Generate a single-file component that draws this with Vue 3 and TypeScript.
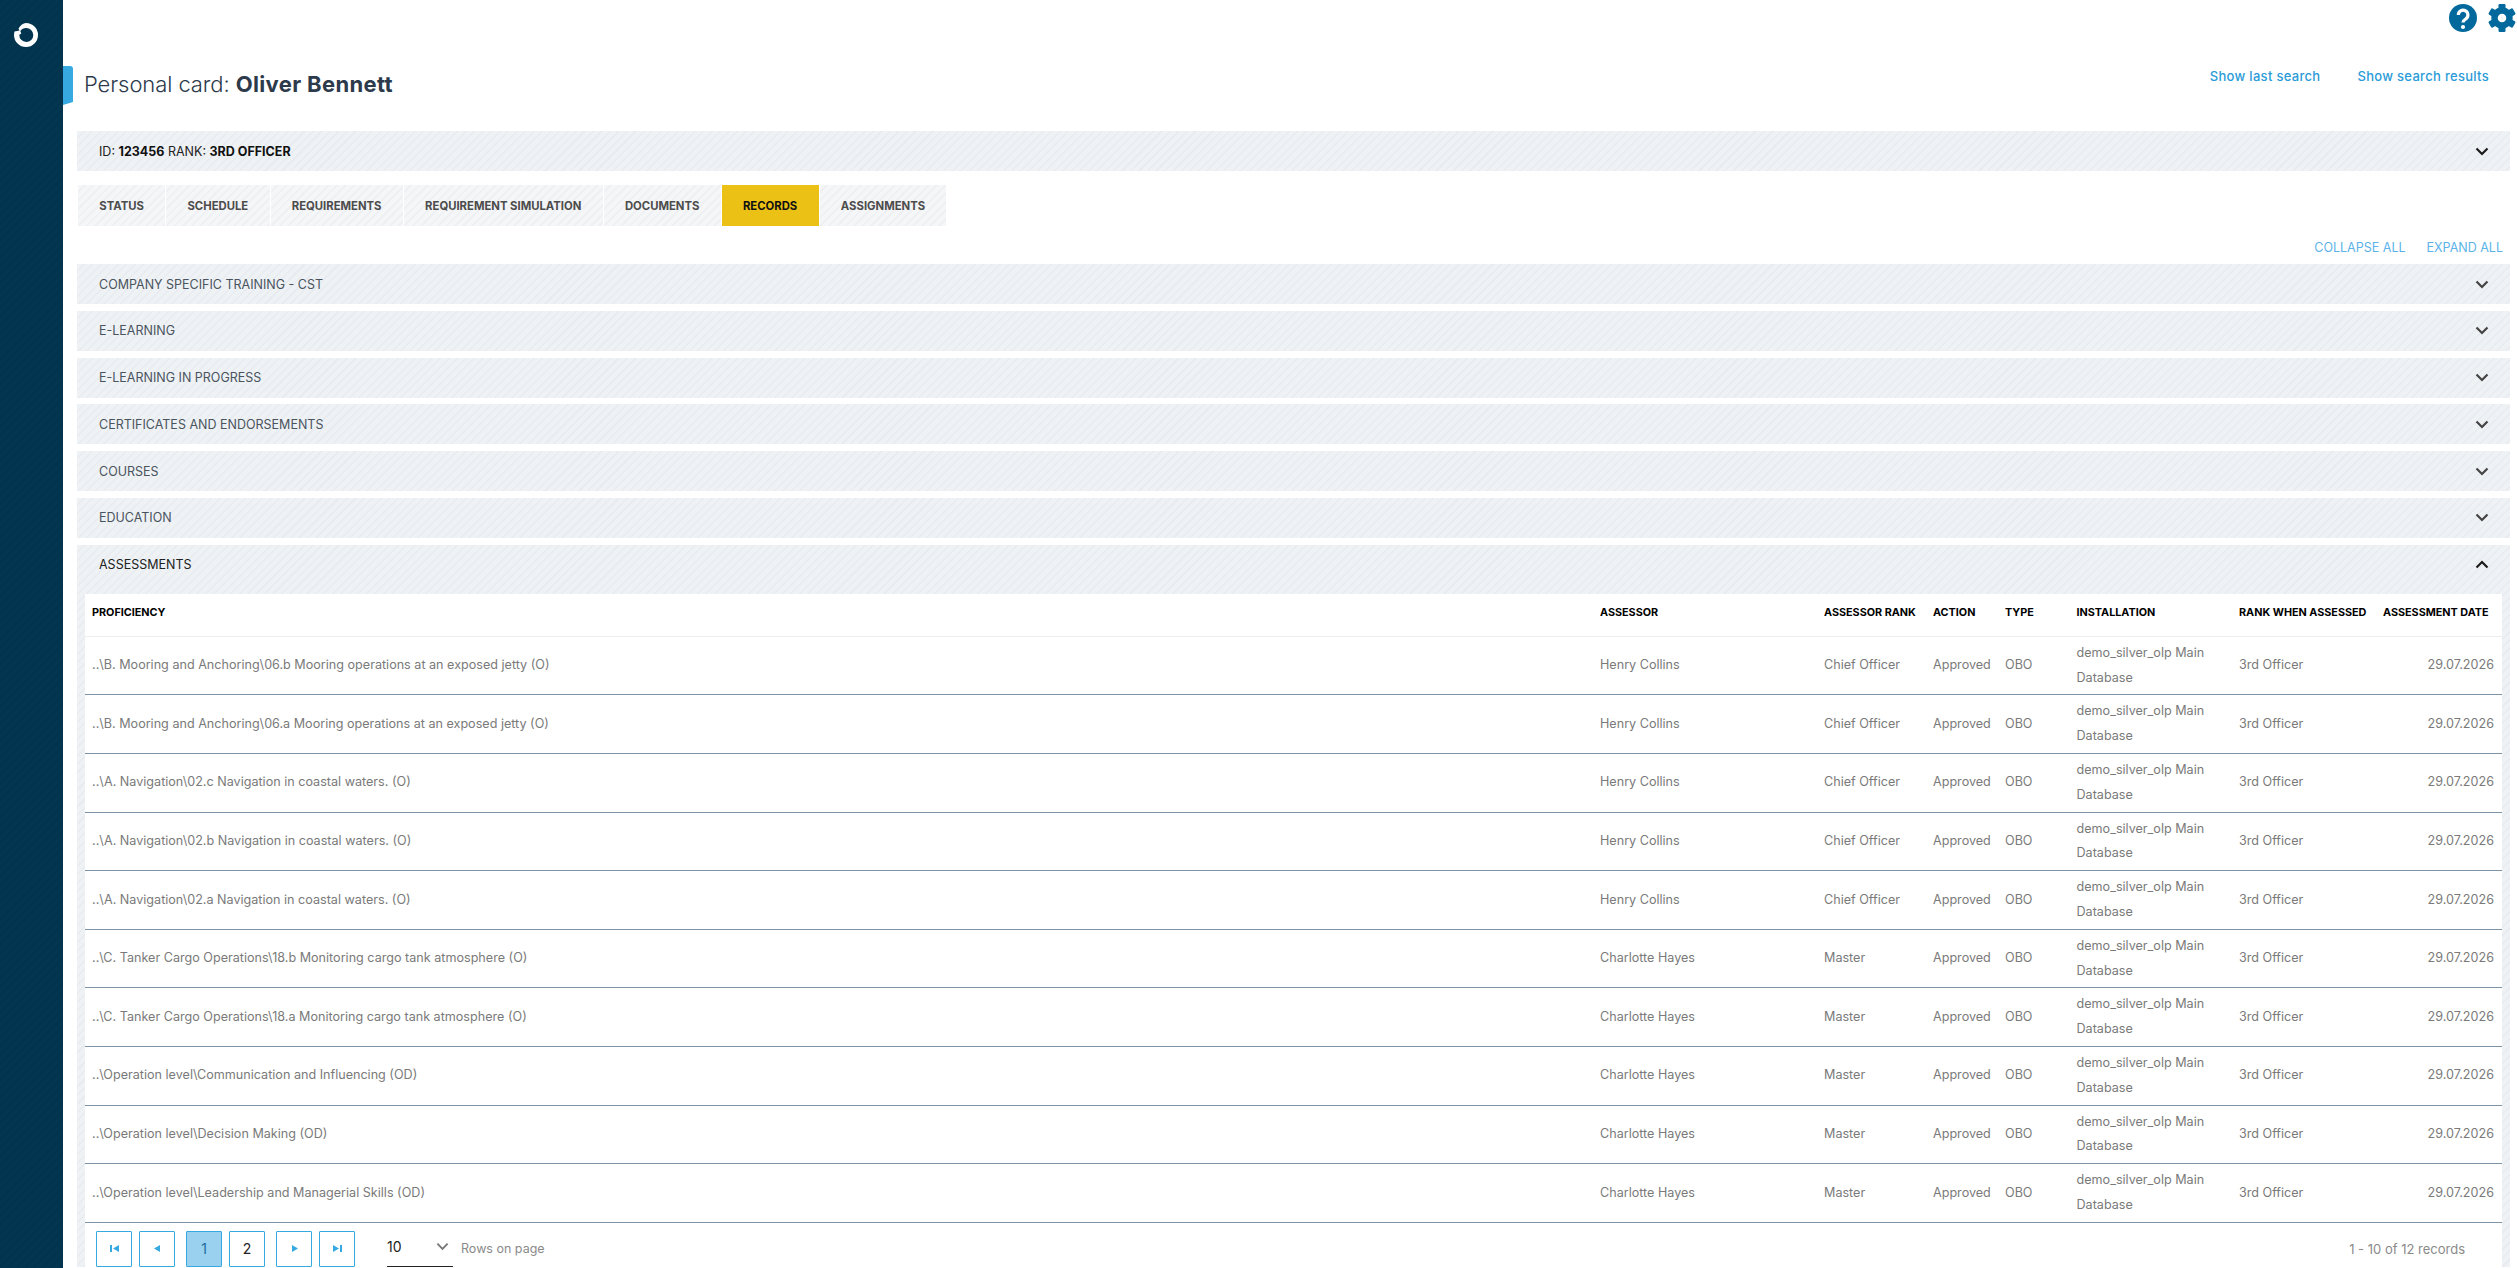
<script setup lang="ts">
interface Row { p: string; a: string; r: string }
const tabs = ['Status', 'Schedule', 'Requirements', 'Requirement simulation', 'Documents', 'Records', 'Assignments']
const sections = ['Company specific training - CST', 'E-learning', 'E-learning in progress', 'Certificates and endorsements', 'Courses', 'Education']
const cols = ['Proficiency', 'Assessor', 'Assessor rank', 'Action', 'Type', 'Installation', 'Rank when assessed', 'Assessment date']
const rows: Row[] = [
  { p: '..\\B. Mooring and Anchoring\\06.b Mooring operations at an exposed jetty (O)', a: 'Henry Collins', r: 'Chief Officer' },
  { p: '..\\B. Mooring and Anchoring\\06.a Mooring operations at an exposed jetty (O)', a: 'Henry Collins', r: 'Chief Officer' },
  { p: '..\\A. Navigation\\02.c Navigation in coastal waters. (O)', a: 'Henry Collins', r: 'Chief Officer' },
  { p: '..\\A. Navigation\\02.b Navigation in coastal waters. (O)', a: 'Henry Collins', r: 'Chief Officer' },
  { p: '..\\A. Navigation\\02.a Navigation in coastal waters. (O)', a: 'Henry Collins', r: 'Chief Officer' },
  { p: '..\\C. Tanker Cargo Operations\\18.b Monitoring cargo tank atmosphere (O)', a: 'Charlotte Hayes', r: 'Master' },
  { p: '..\\C. Tanker Cargo Operations\\18.a Monitoring cargo tank atmosphere (O)', a: 'Charlotte Hayes', r: 'Master' },
  { p: '..\\Operation level\\Communication and Influencing (OD)', a: 'Charlotte Hayes', r: 'Master' },
  { p: '..\\Operation level\\Decision Making (OD)', a: 'Charlotte Hayes', r: 'Master' },
  { p: '..\\Operation level\\Leadership and Managerial Skills (OD)', a: 'Charlotte Hayes', r: 'Master' },
]
const teeth = [0, 60, 120, 180, 240, 300]
</script>

<template>
  <div class="shell">
    <aside class="side">
      <svg class="logo" viewBox="0 0 24 24" aria-label="logo">
        <path d="M12 0a12 12 0 1 1-12 12c0-1.200.2-2.400.5-3.500L5.500 7.500 4.500 5.500C6.600 2.200 9.100 0 12 0zm0 5a7 7 0 0 0-5.700 3l1 2.500-2 1.200A7 7 0 1 0 12 5z" fill="#fff" fill-rule="evenodd" />
      </svg>
    </aside>
    <main class="main">
      <div class="top">
        <svg class="ico" viewBox="0 0 28 28">
          <circle cx="14" cy="14" r="14" fill="#03699c" />
          <path d="M9.300 11a4.800 4.800 0 1 1 7.400 4c-1.700 1.100-2.700 1.700-2.700 3.500" fill="none" stroke="#fff" stroke-width="3.200" />
          <circle cx="14" cy="23" r="2.100" fill="#fff" />
        </svg>
        <svg class="ico" viewBox="0 0 28 28">
          <circle cx="14" cy="14" r="7.500" fill="none" stroke="#03699c" stroke-width="6.400" />
          <rect v-for="t in teeth" :key="t" x="10.500" y="0" width="7" height="6.500" rx="1.200" fill="#03699c" :transform="`rotate(${t} 14 14)`" />
        </svg>
      </div>
      <div class="head">
        <div class="head-left">
          <span class="tag"></span>
          <h1 class="title"><span class="lead">Personal card: </span><b>Oliver Bennett</b></h1>
        </div>
        <nav class="links"><a>Show last search</a><a>Show search results</a></nav>
      </div>
      <div class="bar idbar">
        <span>ID: <b>123456</b> RANK: <b>3RD OFFICER</b></span>
        <svg class="chev dark" viewBox="0 0 14 9"><path d="M1.500 1.500 7 7l5.500-5.500" /></svg>
      </div>
      <div class="tabs">
        <div v-for="t in tabs" :key="t" class="tab" :class="{ on: t === 'Records' }">{{ t }}</div>
      </div>
      <div class="tools"><a>COLLAPSE ALL</a><a>EXPAND ALL</a></div>
      <div class="accs">
        <div v-for="s in sections" :key="s" class="bar acc">
          <span>{{ s }}</span>
          <svg class="chev" viewBox="0 0 14 9"><path d="M1.500 1.500 7 7l5.500-5.500" /></svg>
        </div>
        <section class="panel">
          <div class="panel-head">
            <span>ASSESSMENTS</span>
            <svg class="chev dark" viewBox="0 0 14 9"><path d="M1.500 7.500 7 2l5.500 5.500" /></svg>
          </div>
          <div class="card">
            <table class="grid">
              <colgroup>
                <col class="c1" /><col class="c2" /><col class="c3" /><col class="c4" />
                <col class="c5" /><col class="c6" /><col class="c7" /><col class="c8" />
              </colgroup>
              <thead>
                <tr><th v-for="c in cols" :key="c">{{ c }}</th></tr>
              </thead>
              <tbody>
                <tr v-for="(row, i) in rows" :key="i">
                  <td>{{ row.p }}</td>
                  <td>{{ row.a }}</td>
                  <td>{{ row.r }}</td>
                  <td>Approved</td>
                  <td>OBO</td>
                  <td>demo_silver_olp Main Database</td>
                  <td>3rd Officer</td>
                  <td class="date">29.07.2026</td>
                </tr>
              </tbody>
            </table>
            <div class="pager">
              <div class="pg-left">
                <div class="group">
                  <button class="pg"><svg viewBox="0 0 9 9"><path d="M0 1h2v7H0zM9 1v7L3 4.500z" /></svg></button>
                  <button class="pg"><svg viewBox="0 0 9 9"><path d="M7 1v7L1 4.500z" /></svg></button>
                </div>
                <div class="group">
                  <button class="pg num on">1</button>
                  <button class="pg num">2</button>
                </div>
                <div class="group">
                  <button class="pg"><svg viewBox="0 0 9 9"><path d="M2 1v7l6-3.500z" /></svg></button>
                  <button class="pg"><svg viewBox="0 0 9 9"><path d="M9 1H7v7h2zM0 1v7l6-3.500z" /></svg></button>
                </div>
                <div class="size">
                  <span>10</span>
                  <svg viewBox="0 0 14 9"><path d="M1.500 1.500 7 7l5.500-5.500" /></svg>
                </div>
                <span class="rop">Rows on page</span>
              </div>
              <span class="count">1 - 10 of 12 records</span>
            </div>
          </div>
        </section>
      </div>
    </main>
  </div>
</template>

<style scoped>
.shell { display: flex; height: 100vh; overflow: hidden; background: #fff; font-family: Inter, "Liberation Sans", sans-serif; font-size: 12.500px; color: #333; }
.side { flex: 0 0 63px; background: repeating-linear-gradient(135deg, #02344f 0 4px, #03374f 4px 6px); padding: 23px 0 0 14px; box-sizing: border-box; }
.logo { width: 24px; height: 24px; display: block; }
.main { flex: 1; min-width: 0; padding: 0 7px 0 14px; box-sizing: border-box; }
.top { display: flex; justify-content: flex-end; gap: 11px; padding-top: 4px; height: 32px; box-sizing: border-box; margin-right: -6px; }
.ico { width: 28px; height: 28px; flex: none; }
.head { display: flex; justify-content: space-between; align-items: flex-start; margin: 34px 21px 26px -14px; height: 39px; }
.head-left { display: flex; align-items: flex-start; gap: 11px; }
.tag { width: 10px; height: 39px; background: #36a9e1; border-radius: 0 3px 3px 0; clip-path: polygon(0 0, 100% 0, 100% 92%, 0 100%); }
.title { margin: 0; font-size: 22px; line-height: 36px; font-weight: 300; color: #2c3a4b; letter-spacing: 0.35px; white-space: pre; }
.lead { letter-spacing: -0.080px; }
.title b { font-weight: 700; }
.links { display: flex; gap: 37px; }
.links a { color: #2a9bd8; font-weight: 500; font-size: 13px; letter-spacing: 0.3px; line-height: 20px; }
.bar, .panel-head { display: flex; justify-content: space-between; align-items: center; padding: 0 21px 0 22px; box-sizing: border-box; }
.bar, .panel { background: repeating-linear-gradient(135deg, #eff2f5 0 4.500px, #e8ecf0 4.500px 6px); }
.idbar { height: 40px; color: #222; }
.idbar b { font-weight: 700; color: #111; }
.tabs { display: flex; margin: 14px 0 0 1px; height: 41px; }
.tab { padding: 0 21.300px; display: flex; align-items: center; font-size: 11.300px; font-weight: 700; text-transform: uppercase; color: #4c4c4c; background: repeating-linear-gradient(135deg, #f5f6f8 0 4px, #eef0f3 4px 6px); border-right: 1px solid #fff; white-space: nowrap; }
.tab.on { background: #ecc115; color: #111; }
.tools { display: flex; justify-content: flex-end; gap: 21px; height: 38px; align-items: center; padding: 4px 7px 0 0; box-sizing: border-box; font-size: 12.500px; color: #5cb3e8; }
.accs { display: flex; flex-direction: column; gap: 6.800px; }
.acc { height: 40px; color: #4a545e; text-transform: uppercase; }
.panel { padding: 0 8px; }
.panel-head { height: 40px; margin: 0 -8px 9.500px; color: #222; }
.chev { width: 14px; height: 9px; fill: none; stroke: #444; stroke-width: 2.200; flex: none; }
.chev.dark { stroke: #1b1b1b; }
.card { background: #fff; }
.grid { width: 100%; border-collapse: collapse; table-layout: fixed; }
.c1 { width: 1508px; } .c2 { width: 224px; } .c3 { width: 109px; } .c4 { width: 72px; }
.c5 { width: 71.500px; } .c6 { width: 162.500px; } .c7 { width: 144px; } .c8 { width: 126px; }
th { height: 42px; padding: 0 7px 6px; box-sizing: border-box; text-align: left; font-size: 10.800px; font-weight: 700; color: #000; text-transform: uppercase; border-bottom: 1px solid #eee; white-space: nowrap; }
td { padding: 4px 7px; font-size: 12.600px; line-height: 24.800px; color: #7a7a7a; border-bottom: 1px solid #7e93a6; }
.date { text-align: right; padding-right: 8px; }
.pager { display: flex; justify-content: space-between; align-items: flex-start; padding: 8px 37px 0 11px; }
.pg-left { display: flex; align-items: center; gap: 11px; }
.group { display: flex; gap: 7px; }
.pg { width: 36px; height: 36px; padding: 0; border: 1px solid #36a9e1; background: #fff; display: flex; align-items: center; justify-content: center; font-family: inherit; font-size: 14px; color: #222; border-radius: 1px; }
.pg svg { width: 9px; height: 9px; fill: #36a9e1; }
.pg.on { background: #99d1ef; color: #1f6d9b; }
.size { margin-left: 21px; width: 66px; height: 36px; box-sizing: border-box; border-bottom: 1px solid #222; display: flex; align-items: center; justify-content: space-between; padding: 0 4px 4px 0; font-size: 14px; color: #222; }
.size svg { width: 13px; height: 9px; fill: none; stroke: #777; stroke-width: 2; }
.rop { margin-left: -3px; color: #8a8a8a; }
.count { color: #8a8a8a; line-height: 36px; font-size: 13px; }
</style>

<style>
html, body { margin: 0; overflow: hidden; }
</style>
